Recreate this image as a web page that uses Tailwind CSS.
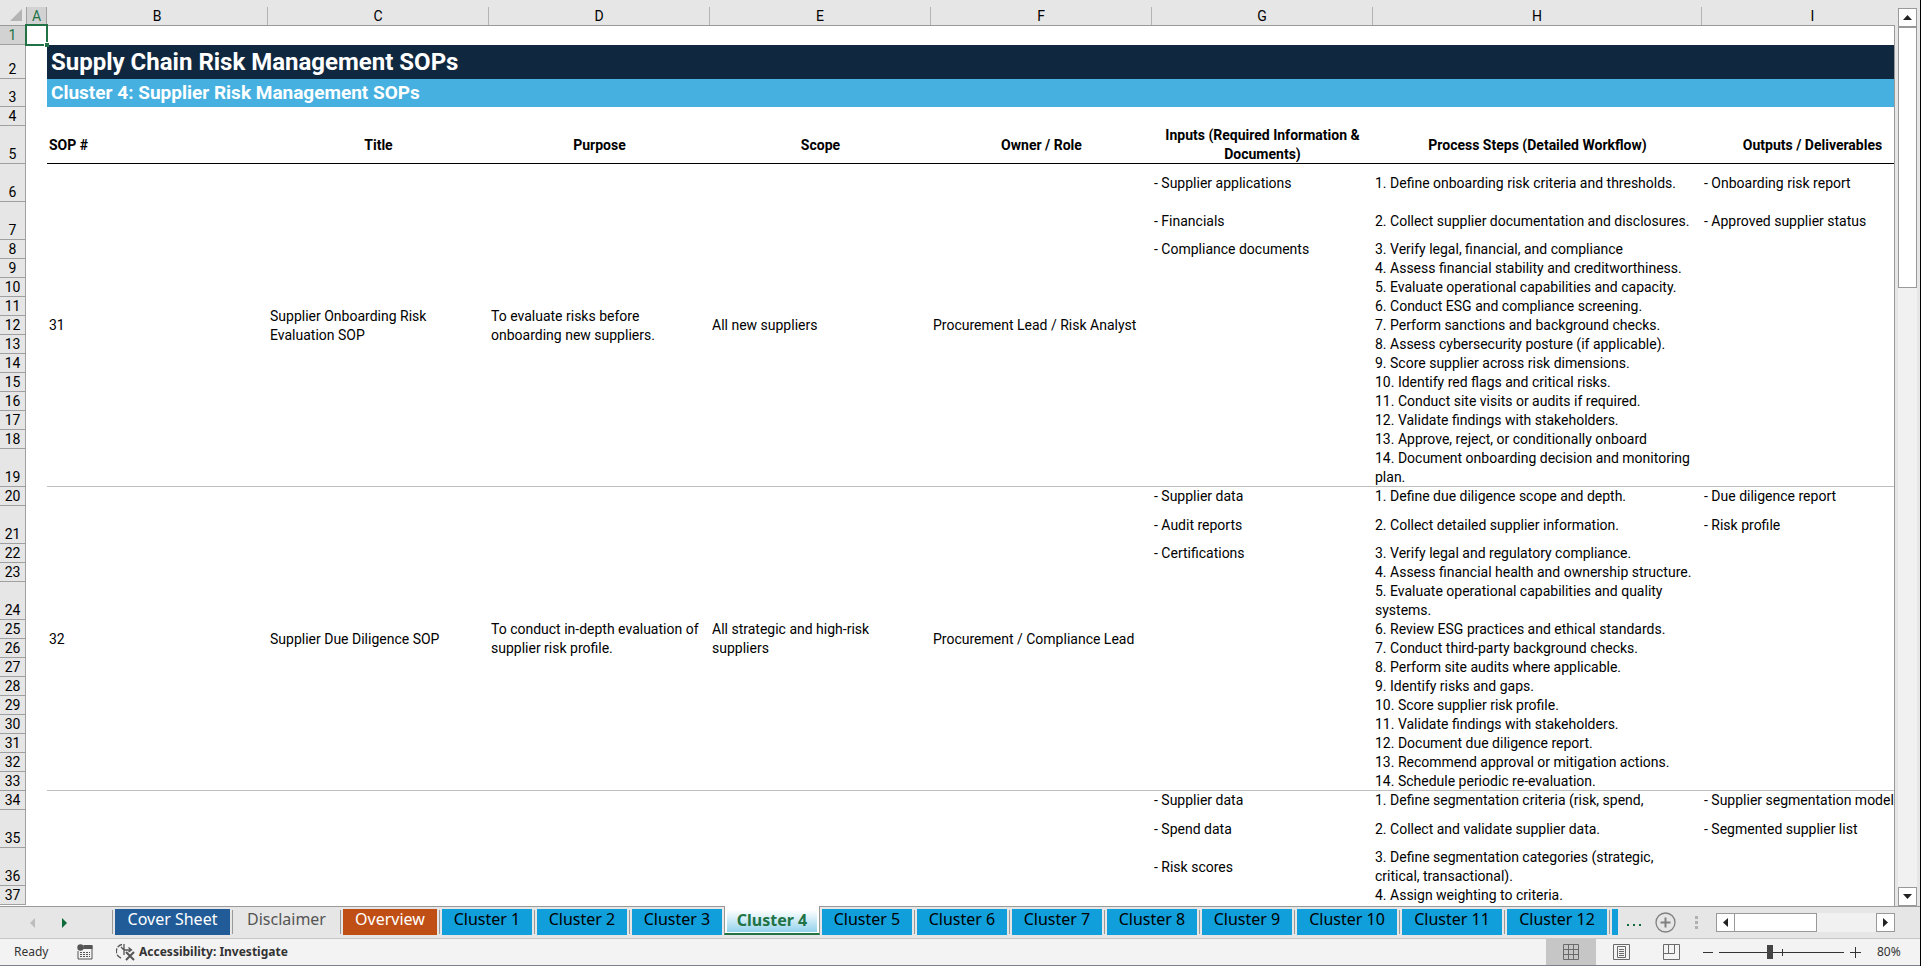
<!DOCTYPE html>
<html lang="en">
<head>
    <meta charset="utf-8"/>
    <meta content="width=device-width, initial-scale=1.0" name="viewport"/>
    <title>Supply Chain Risk Management SOPs</title>
    <script src="https://cdn.jsdelivr.net/npm/@tailwindcss/browser@4"></script>
</head>
<body class="flex h-screen flex-col overflow-hidden border-r border-black bg-[#e6e6e6] text-black">

    <!-- Sheet and vertical scrollbar -->
    <main class="flex min-h-0 flex-1">
        <div class="min-w-0 flex-1 overflow-hidden bg-white">
            <table class="w-[1923px] table-fixed border-separate border-spacing-0 font-['Roboto',sans-serif] text-sm leading-[19px] [&_tbody_th]:border-r [&_tbody_th]:border-b [&_tbody_th]:border-[#a0a0a0] [&_tbody_th]:bg-[#e6e6e6] [&_tbody_th]:p-0 [&_tbody_th]:align-bottom [&_tbody_th]:leading-[18px] [&_tbody_th]:font-normal [&_td]:px-[2px] [&_td]:py-0">
                <colgroup>
                    <col class="w-[26px]"/>
                    <col class="w-[21px]"/>
                    <col class="w-[221px]"/>
                    <col class="w-[221px]"/>
                    <col class="w-[221px]"/>
                    <col class="w-[221px]"/>
                    <col class="w-[221px]"/>
                    <col class="w-[221px]"/>
                    <col class="w-[329px]"/>
                    <col class="w-[221px]"/>
                </colgroup>
                <thead>
                    <tr class="h-[26px] [&>th]:border-b [&>th]:border-[#999] [&>th]:bg-[#e6e6e6] [&>th]:p-0 [&>th]:align-bottom [&>th]:leading-[18px] [&>th]:font-normal">
                        <th>
                            <svg class="ml-[10px] mb-1 block h-3 w-3" viewBox="0 0 12 12"><path d="M12 0v12H0z" fill="#b4b4b4"/></svg>
                        </th>
                        <th><div class="mt-[6px] border-x border-[#a0a0a0] bg-[#d2d2d2] text-[#217346]">A</div></th>
                        <th><div class="mt-[6px] border-r border-[#b4b4b4]">B</div></th>
                        <th><div class="mt-[6px] border-r border-[#b4b4b4]">C</div></th>
                        <th><div class="mt-[6px] border-r border-[#b4b4b4]">D</div></th>
                        <th><div class="mt-[6px] border-r border-[#b4b4b4]">E</div></th>
                        <th><div class="mt-[6px] border-r border-[#b4b4b4]">F</div></th>
                        <th><div class="mt-[6px] border-r border-[#b4b4b4]">G</div></th>
                        <th><div class="mt-[6px] border-r border-[#b4b4b4]">H</div></th>
                        <th><div class="mt-[6px]">I</div></th>
                    </tr>
                </thead>
                <tbody>
                    <tr class="h-[19px]">
                        <th><div class="bg-[#d2d2d2] text-[#217346]">1</div></th>
                        <td class="relative">
                            <div class="absolute -top-[2px] -left-[1px] h-[22px] w-[23px] border-2 border-[#217346]"></div>
                            <div class="absolute -right-[2px] -bottom-[2px] h-[5px] w-[5px] border-t border-l border-white bg-[#217346]"></div>
                        </td>
                        <td colspan="8"></td>
                    </tr>
                    <tr class="h-[34px]">
                        <th>2</th>
                        <td rowspan="36"></td>
                        <td colspan="8" class="bg-[#10283f] text-2xl leading-[34px] font-bold text-white"><h1 class="pl-[2px]">Supply Chain Risk Management SOPs</h1></td>
                    </tr>
                    <tr class="h-[28px]">
                        <th>3</th>
                        <td colspan="8" class="bg-[#46b1e1] text-[19px] leading-[28px] font-bold text-white"><h2 class="pl-[2px]">Cluster 4: Supplier Risk Management SOPs</h2></td>
                    </tr>
                    <tr class="h-[19px]">
                        <th>4</th>
                        <td colspan="8"></td>
                    </tr>
                    <tr class="h-[38px] text-center font-bold [&>td]:shadow-[inset_0_-1px_0_#000]">
                        <th>5</th>
                        <td class="text-left">SOP #</td>
                        <td>Title</td>
                        <td>Purpose</td>
                        <td>Scope</td>
                        <td>Owner / Role</td>
                        <td>Inputs (Required Information &amp; Documents)</td>
                        <td>Process Steps (Detailed Workflow)</td>
                        <td>Outputs / Deliverables</td>
                    </tr>

                    <!-- SOP 31 -->
                    <tr class="h-[38px]">
                        <th>6</th>
                        <td rowspan="14" class="shadow-[inset_0_-1px_0_#bfbfbf]">31</td>
                        <td rowspan="14" class="shadow-[inset_0_-1px_0_#bfbfbf]">Supplier Onboarding Risk<br/>Evaluation SOP</td>
                        <td rowspan="14" class="shadow-[inset_0_-1px_0_#bfbfbf]">To evaluate risks before<br/>onboarding new suppliers.</td>
                        <td rowspan="14" class="shadow-[inset_0_-1px_0_#bfbfbf]">All new suppliers</td>
                        <td rowspan="14" class="shadow-[inset_0_-1px_0_#bfbfbf]">Procurement Lead / Risk Analyst</td>
                        <td>- Supplier applications</td>
                        <td>1. Define onboarding risk criteria and thresholds.</td>
                        <td>- Onboarding risk report</td>
                    </tr>
                    <tr class="h-[38px]">
                        <th>7</th>
                        <td>- Financials</td>
                        <td>2. Collect supplier documentation and disclosures.</td>
                        <td>- Approved supplier status</td>
                    </tr>
                    <tr class="h-[19px]">
                        <th>8</th>
                        <td>- Compliance documents</td>
                        <td>3. Verify legal, financial, and compliance</td>
                        <td rowspan="12" class="shadow-[inset_0_-1px_0_#bfbfbf]"></td>
                    </tr>
                    <tr class="h-[19px]">
                        <th>9</th>
                        <td rowspan="11" class="shadow-[inset_0_-1px_0_#bfbfbf]"></td>
                        <td>4. Assess financial stability and creditworthiness.</td>
                    </tr>
                    <tr class="h-[19px]"><th>10</th><td>5. Evaluate operational capabilities and capacity.</td></tr>
                    <tr class="h-[19px]"><th>11</th><td>6. Conduct ESG and compliance screening.</td></tr>
                    <tr class="h-[19px]"><th>12</th><td>7. Perform sanctions and background checks.</td></tr>
                    <tr class="h-[19px]"><th>13</th><td>8. Assess cybersecurity posture (if applicable).</td></tr>
                    <tr class="h-[19px]"><th>14</th><td>9. Score supplier across risk dimensions.</td></tr>
                    <tr class="h-[19px]"><th>15</th><td>10. Identify red flags and critical risks.</td></tr>
                    <tr class="h-[19px]"><th>16</th><td>11. Conduct site visits or audits if required.</td></tr>
                    <tr class="h-[19px]"><th>17</th><td>12. Validate findings with stakeholders.</td></tr>
                    <tr class="h-[19px]"><th>18</th><td>13. Approve, reject, or conditionally onboard</td></tr>
                    <tr class="h-[38px]"><th>19</th><td class="shadow-[inset_0_-1px_0_#bfbfbf]">14. Document onboarding decision and monitoring<br/>plan.</td></tr>

                    <!-- SOP 32 -->
                    <tr class="h-[19px]">
                        <th>20</th>
                        <td rowspan="14" class="shadow-[inset_0_-1px_0_#bfbfbf]">32</td>
                        <td rowspan="14" class="shadow-[inset_0_-1px_0_#bfbfbf]">Supplier Due Diligence SOP</td>
                        <td rowspan="14" class="whitespace-nowrap shadow-[inset_0_-1px_0_#bfbfbf]">To conduct in-depth evaluation of<br/>supplier risk profile.</td>
                        <td rowspan="14" class="shadow-[inset_0_-1px_0_#bfbfbf]">All strategic and high-risk<br/>suppliers</td>
                        <td rowspan="14" class="shadow-[inset_0_-1px_0_#bfbfbf]">Procurement / Compliance Lead</td>
                        <td>- Supplier data</td>
                        <td>1. Define due diligence scope and depth.</td>
                        <td>- Due diligence report</td>
                    </tr>
                    <tr class="h-[38px]">
                        <th>21</th>
                        <td>- Audit reports</td>
                        <td>2. Collect detailed supplier information.</td>
                        <td>- Risk profile</td>
                    </tr>
                    <tr class="h-[19px]">
                        <th>22</th>
                        <td>- Certifications</td>
                        <td>3. Verify legal and regulatory compliance.</td>
                        <td rowspan="12" class="shadow-[inset_0_-1px_0_#bfbfbf]"></td>
                    </tr>
                    <tr class="h-[19px]">
                        <th>23</th>
                        <td rowspan="11" class="shadow-[inset_0_-1px_0_#bfbfbf]"></td>
                        <td>4. Assess financial health and ownership structure.</td>
                    </tr>
                    <tr class="h-[38px]"><th>24</th><td>5. Evaluate operational capabilities and quality<br/>systems.</td></tr>
                    <tr class="h-[19px]"><th>25</th><td>6. Review ESG practices and ethical standards.</td></tr>
                    <tr class="h-[19px]"><th>26</th><td>7. Conduct third-party background checks.</td></tr>
                    <tr class="h-[19px]"><th>27</th><td>8. Perform site audits where applicable.</td></tr>
                    <tr class="h-[19px]"><th>28</th><td>9. Identify risks and gaps.</td></tr>
                    <tr class="h-[19px]"><th>29</th><td>10. Score supplier risk profile.</td></tr>
                    <tr class="h-[19px]"><th>30</th><td>11. Validate findings with stakeholders.</td></tr>
                    <tr class="h-[19px]"><th>31</th><td>12. Document due diligence report.</td></tr>
                    <tr class="h-[19px]"><th>32</th><td>13. Recommend approval or mitigation actions.</td></tr>
                    <tr class="h-[19px]"><th>33</th><td class="shadow-[inset_0_-1px_0_#bfbfbf]">14. Schedule periodic re-evaluation.</td></tr>

                    <!-- SOP 33 -->
                    <tr class="h-[19px]">
                        <th>34</th>
                        <td rowspan="4" colspan="5"></td>
                        <td>- Supplier data</td>
                        <td>1. Define segmentation criteria (risk, spend,</td>
                        <td>- Supplier segmentation model</td>
                    </tr>
                    <tr class="h-[38px]">
                        <th>35</th>
                        <td>- Spend data</td>
                        <td>2. Collect and validate supplier data.</td>
                        <td>- Segmented supplier list</td>
                    </tr>
                    <tr class="h-[38px]">
                        <th>36</th>
                        <td>- Risk scores</td>
                        <td>3. Define segmentation categories (strategic,<br/>critical, transactional).</td>
                        <td rowspan="2"></td>
                    </tr>
                    <tr class="h-[19px]">
                        <th>37</th>
                        <td></td>
                        <td>4. Assign weighting to criteria.</td>
                    </tr>
                </tbody>
            </table>
        </div>
        <div class="mt-[25px] w-1 border-l border-[#999]"></div>
        <div class="mt-2 mr-[3px] flex w-[19px] flex-col bg-[#f1f1f1]">
            <button aria-label="Scroll up" class="flex h-[19px] items-center justify-center border border-[#999] bg-white">
                <svg class="h-[5px] w-[9px]" viewBox="0 0 9 5"><path d="M4.5 0L9 5H0z" fill="#222"/></svg>
            </button>
            <div class="h-[261px] border border-[#999] bg-white"></div>
            <button aria-label="Scroll down" class="mt-auto flex h-[19px] items-center justify-center border border-[#999] bg-white">
                <svg class="h-[5px] w-[9px]" viewBox="0 0 9 5"><path d="M0 0h9L4.5 5z" fill="#222"/></svg>
            </button>
        </div>
    </main>

    <!-- Sheet tabs -->
    <nav class="flex h-8 font-['Noto_Sans',sans-serif] text-base">
        <div class="flex w-[112px] items-center gap-[27px] border-t border-[#999] pl-[30px]">
            <button aria-label="Previous sheet"><svg class="h-[10px] w-[5px]" viewBox="0 0 5 10"><path d="M5 0v10L0 5z" fill="#bdbdbd"/></svg></button>
            <button aria-label="Next sheet"><svg class="h-[10px] w-[5px]" viewBox="0 0 5 10"><path d="M0 0v10l5-5z" fill="#0e6b39"/></svg></button>
        </div>
        <div class="flex min-w-0 flex-1">
            <div class="flex border-t border-[#999] pt-[2px] pb-[3px] [&>button]:mr-[2px] [&>button]:ml-[2px] [&>button]:bg-[#109fda] [&>button]:pb-[6px] [&>button]:leading-[20px] [&>span]:my-px [&>span]:w-px [&>span]:bg-[#999]">
                <span></span><button class="w-[115px] bg-[#215c98]! text-white">Cover Sheet</button>
                <span></span><button class="w-[103px] bg-transparent! text-[#555]">Disclaimer</button>
                <span></span><button class="w-[94px] bg-[#c04f15]! text-white">Overview</button>
                <span></span><button class="w-[90px]">Cluster 1</button>
                <span></span><button class="w-[90px]">Cluster 2</button>
                <span></span><button class="w-[90px]">Cluster 3</button>
            </div>
            <button class="mb-[3px] w-[96px] border-x border-b-2 border-x-[#999] border-b-[#217346] bg-white px-[2px] pt-1 pb-[1px] font-bold text-[#217346]"><div class="bg-linear-to-b from-white to-[#93d2ec] pb-[2px] leading-[20px]">Cluster 4</div></button>
            <div class="flex border-t border-[#999] pt-[2px] pb-[3px] [&>button]:mr-[2px] [&>button]:ml-[2px] [&>button]:bg-[#109fda] [&>button]:pb-[6px] [&>button]:leading-[20px] [&>span]:my-px [&>span]:w-px [&>span]:bg-[#999]">
                <button class="w-[90px]">Cluster 5</button>
                <span></span><button class="w-[90px]">Cluster 6</button>
                <span></span><button class="w-[90px]">Cluster 7</button>
                <span></span><button class="w-[90px]">Cluster 8</button>
                <span></span><button class="w-[90px]">Cluster 9</button>
                <span></span><button class="w-[100px]">Cluster 10</button>
                <span></span><button class="w-[100px]">Cluster 11</button>
                <span></span><button class="w-[100px]">Cluster 12</button>
                <span></span><button aria-label="Cluster 13" class="w-[6px]"></button>
            </div>
            <div class="flex-1 border-t border-[#999]"></div>
        </div>
        <div class="flex items-center border-t border-[#999] pr-[25px]">
            <button class="mr-[14px] pt-1" aria-label="More sheets">
                <svg class="h-[2px] w-[14px]" viewBox="0 0 14 2"><path d="M0 0h2v2H0zM6 0h2v2H6zM12 0h2v2h-2z" fill="#0e6b39"/></svg>
            </button>
            <button class="mr-[19px]" aria-label="New sheet">
                <svg class="h-[21px] w-[21px]" viewBox="0 0 21 21" fill="none" stroke="#808080"><circle cx="10.5" cy="10.5" r="9.5" stroke-width="1.3"/><path d="M10.5 5.5v10M5.5 10.5h10" stroke-width="2"/></svg>
            </button>
            <svg class="mr-[18px] h-[13px] w-[3px]" viewBox="0 0 3 13"><path d="M0 0h3v3H0zM0 5h3v3H0zM0 10h3v3H0z" fill="#b0b0b0"/></svg>
            <div class="flex h-[19px] w-[179px] bg-[#f1f1f1]">
                <button aria-label="Scroll left" class="flex w-[19px] items-center justify-center border border-[#999] bg-white"><svg class="h-[9px] w-[5px]" viewBox="0 0 5 9"><path d="M5 0v9L0 4.5z" fill="#222"/></svg></button>
                <div class="w-[82px] border border-l-0 border-[#999] bg-white"></div>
                <button aria-label="Scroll right" class="ml-auto flex w-[19px] items-center justify-center border border-[#999] bg-white"><svg class="h-[9px] w-[5px]" viewBox="0 0 5 9"><path d="M0 0v9l5-4.5z" fill="#222"/></svg></button>
            </div>
        </div>
    </nav>

    <!-- Status bar -->
    <footer class="flex h-7 items-center border-t border-b border-t-[#c6c6c6] border-b-[#7a838c] bg-[#f3f3f3] pr-[19px] pl-[14px] font-['Noto_Sans',sans-serif] text-xs text-[#333]">
        <span class="w-[63px]">Ready</span>
        <svg class="mr-[23px] h-4 w-4" viewBox="0 0 16 16" fill="none"><path d="M5 2h10v13H1V7" stroke="#555"/><path d="M7 1h8.500v4H6z" fill="#555"/><circle cx="3.500" cy="3.500" r="3.200" fill="#555"/><path d="M3 8.500h10M3 10.500h10M3 12.500h10" stroke="#555" stroke-dasharray="2 1"/></svg>
        <button class="flex items-center gap-[3px] font-bold">
            <svg class="h-[18px] w-5" viewBox="0 0 20 18" fill="none" stroke="#555"><path d="M6 1.500A7 7 0 0 0 5 15" stroke-width="1.500" stroke-dasharray="5 1.500"/><path d="M8 1v6h7M12.500 4.500L15.500 7l-3 2M8 7v5M5 4l3 3" stroke-width="1.300"/><path d="M10 9l8 8M18 9l-8 8" stroke-width="2"/></svg>
            Accessibility: Investigate
        </button>
        <div class="ml-auto flex h-full items-center">
            <button aria-label="Normal view" class="flex h-full w-[50px] items-center justify-center bg-[#c6c6c6]"><svg class="h-4 w-4" viewBox="0 0 16 16" fill="none" stroke="#6a6a6a"><path d="M.5.5h15v15H.5zM5.500 0v16M10.500 0v16M0 5.500h16M0 10.500h16"/></svg></button>
            <button aria-label="Page layout" class="flex h-full w-[50px] items-center justify-center"><svg class="h-4 w-[17px]" viewBox="0 0 17 16" fill="none" stroke="#6a6a6a"><path d="M.5.5h16v15H.5zM4.500 2.500h8v11h-8zM6 5.500h5M6 7.500h5M6 9.500h5M6 11.500h5"/></svg></button>
            <button aria-label="Page break preview" class="flex h-full w-[50px] items-center justify-center"><svg class="h-4 w-[17px]" viewBox="0 0 17 16" fill="none" stroke="#6a6a6a"><path d="M.5.5h16v15H.5zM5.500 0v9.500M11.500 0v9.500M.5 9.500h11"/></svg></button>
            <button aria-label="Zoom out" class="ml-[7px]"><svg class="h-[11px] w-[10px]" viewBox="0 0 10 11"><path d="M0 5h10v1H0z" fill="#333"/></svg></button>
            <div class="relative mx-[6px] flex w-[125px] items-center">
                <input type="range" aria-label="Zoom" min="0" max="100" value="40" class="h-4 w-full appearance-none bg-[linear-gradient(#333,#333)] bg-[length:100%_1px] bg-center bg-no-repeat [&::-webkit-slider-thumb]:h-[14px] [&::-webkit-slider-thumb]:w-[6px] [&::-webkit-slider-thumb]:appearance-none [&::-webkit-slider-thumb]:bg-[#444]"/>
                <div class="absolute left-1/2 h-[7px] w-px bg-[#333]"></div>
            </div>
            <button aria-label="Zoom in"><svg class="h-[11px] w-[11px]" viewBox="0 0 11 11"><path d="M0 5h11v1H0zM5 0h1v11H5z" fill="#333"/></svg></button>
            <span class="ml-4 w-[24px]">80%</span>
        </div>
    </footer>
</body>
</html>
